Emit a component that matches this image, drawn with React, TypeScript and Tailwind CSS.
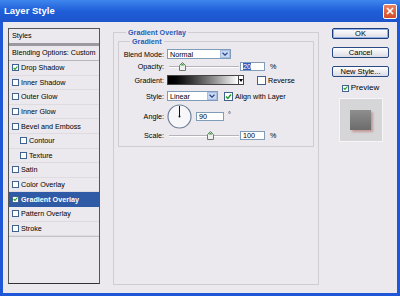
const styles = [
  { name: 'Drop Shadow', checked: true },
  { name: 'Inner Shadow' },
  { name: 'Outer Glow' },
  { name: 'Inner Glow' },
  { name: 'Bevel and Emboss' },
  { name: 'Contour', indent: true },
  { name: 'Texture', indent: true },
  { name: 'Satin' },
  { name: 'Color Overlay' },
  { name: 'Gradient Overlay', checked: true, active: true },
  { name: 'Pattern Overlay' },
  { name: 'Stroke' },
];

function Check({ on }: { on?: boolean }) {
  return (
    <span className="inline-flex h-[7px] w-[7px] shrink-0 items-center justify-center border border-[#3f628f] bg-white">
      {on && (
        <svg width="6" height="6" viewBox="0 0 6 6">
          <path d="M0.8 3 L2.4 4.6 L5.3 1.2" fill="none" stroke="#1e9a1e" strokeWidth="1.3" />
        </svg>
      )}
    </span>
  );
}

function Chevron() {
  return (
    <span className="flex h-full w-[10px] items-center justify-center border border-[#a9bde0] bg-[#c8d8f4]">
      <svg width="6" height="4" viewBox="0 0 6 4">
        <path d="M0.5 0.8 L3 3.2 L5.5 0.8" fill="none" stroke="#2c4a86" strokeWidth="1.2" />
      </svg>
    </span>
  );
}

function Slider({ at }: { at: number }) {
  return (
    <div className="relative h-full w-[70px]">
      <div className="absolute left-0 right-0 top-[5px] h-[2px] border-t border-[#b5b3b8] bg-white" />
      <svg className="absolute top-[1px]" style={{ left: at - 3 }} width="7" height="9" viewBox="0 0 7 9">
        <path d="M3.5 0.5 L6.5 3.5 L6.5 8.5 L0.5 8.5 L0.5 3.5 Z" fill="#f0f0f0" stroke="#6f7a6f" />
        <path d="M3.5 1.5 L5.5 3.5 L1.5 3.5 Z" fill="#2fa62f" />
      </svg>
    </div>
  );
}

function Field({ value, sel, w }: { value: string; sel?: boolean; w: string }) {
  return (
    <span className={`flex h-[9px] items-center border border-[#7f9db9] bg-white pl-[2px] ${w}`}>
      <span className={sel ? 'bg-[#2f5ec0] text-white' : ''}>{value}</span>
    </span>
  );
}

function Btn({ label, main }: { label: string; main?: boolean }) {
  return (
    <div
      className={`flex h-[11px] w-[57px] items-center justify-center rounded-[2px] border bg-gradient-to-b from-white to-[#dcdbe4] ${
        main ? 'border-[#1d3d7a] shadow-[inset_0_0_0_1px_#8fb0e6]' : 'border-[#2a4a86]'
      }`}
    >
      {label}
    </div>
  );
}

export default function App() {
  return (
    <div
      className="flex h-[296px] w-[400px] flex-col bg-[#1f58d6] text-[7.2px] leading-none text-black"
      style={{ fontFamily: '"Liberation Sans", Arial, sans-serif' }}
    >
      <div className="flex h-[22px] items-center justify-between bg-gradient-to-b from-[#3f86ee] via-[#1f5ed8] to-[#1c54cc] pl-[4px] pr-[3px]">
        <span className="text-[9.5px] font-bold text-white">Layer Style</span>
        <span className="flex h-[15px] w-[14px] items-center justify-center rounded-[2px] border border-white bg-gradient-to-b from-[#e98262] to-[#d44a25]">
          <svg width="8" height="8" viewBox="0 0 8 8">
            <path d="M1 1 L7 7 M7 1 L1 7" stroke="white" strokeWidth="1.7" />
          </svg>
        </span>
      </div>

      <div className="mx-[3px] mb-[3px] flex flex-1 bg-[#ebe9ed] pl-[5px] pt-[6px]">
        {/* styles list */}
        <div className="flex h-[256px] w-[92px] flex-col border border-[#555] border-b-[#333] bg-[#ebe9ed]">
          <div className="flex h-[14px] items-center pl-[3px]">Styles</div>
          <div className="h-[3px] bg-[#9c9aa0]" />
          <div className="flex h-[15px] items-center border-b border-[#b8b6bb] pl-[3px]">Blending Options: Custom</div>
          {styles.map((s) => (
            <div
              key={s.name}
              className={`flex h-[14.6px] items-center gap-[2px] border-b ${
                s.active ? 'border-[#2f5aa6] bg-[#2f5aa6] font-bold text-white' : 'border-[#dedce1]'
              } ${s.indent ? 'pl-[11px]' : 'pl-[3px]'}`}
            >
              <Check on={s.checked} />
              {s.name}
            </div>
          ))}
          <div className="flex-1 border-t border-[#c4c2c7]" />
        </div>

        {/* options */}
        <fieldset className="ml-[13px] mt-[1px] h-[256px] w-[206px] border border-[#cfcdd2] px-[4px]">
          <legend className="ml-[8px] px-[2px] font-bold text-[#2a5bb6]">Gradient Overlay</legend>
          <fieldset className="mt-[2px] border border-[#cfcdd2] pb-[6px]">
            <legend className="ml-[11px] px-[2px] font-bold text-[#2a5bb6]">Gradient</legend>

            <div className="mt-[4px] flex h-[10px] items-center gap-[3px]">
              <span className="w-[45px] text-right">Blend Mode:</span>
              <span className="flex h-full w-[64px] items-center justify-between border border-[#7f9db9] bg-white pl-[2px]">
                Normal
                <Chevron />
              </span>
            </div>

            <div className="mt-[2px] flex h-[10px] items-center gap-[3px]">
              <span className="w-[45px] text-right">Opacity:</span>
              <div className="ml-[2px] flex h-full items-center">
                <Slider at={13} />
                <Field value="20" sel w="w-[25px] ml-[1px]" />
                <span className="ml-[5px]">%</span>
              </div>
            </div>

            <div className="mt-[4px] flex h-[10px] items-center gap-[3px]">
              <span className="w-[45px] text-right">Gradient:</span>
              <span className="flex h-full w-[77px] items-stretch border border-[#444]">
                <span className="flex-1 bg-gradient-to-r from-black to-white" />
                <span className="flex w-[5px] items-center justify-center border-l border-[#444] bg-white">
                  <svg width="4" height="3" viewBox="0 0 4 3">
                    <path d="M0 0 L4 0 L2 3 Z" fill="#000" />
                  </svg>
                </span>
              </span>
              <span className="ml-[10px] flex items-center gap-[2px]">
                <span className="h-[9px] w-[9px] border border-[#3f628f] bg-white" />
                Reverse
              </span>
            </div>

            <div className="mt-[6px] flex h-[10px] items-center gap-[3px]">
              <span className="w-[45px] text-right">Style:</span>
              <span className="flex h-full w-[51px] items-center justify-between border border-[#7f9db9] bg-white pl-[2px]">
                Linear
                <Chevron />
              </span>
              <span className="ml-[3px] flex items-center gap-[2px]">
                <span className="flex h-[9px] w-[9px] items-center justify-center border border-[#3f628f] bg-white">
                  <svg width="7" height="7" viewBox="0 0 7 7">
                    <path d="M1 3.5 L2.8 5.4 L6 1.5" fill="none" stroke="#1e9a1e" strokeWidth="1.4" />
                  </svg>
                </span>
                Align with Layer
              </span>
            </div>

            <div className="mt-[3px] flex h-[24px] items-center gap-[3px]">
              <span className="w-[45px] text-right">Angle:</span>
              <svg width="25" height="25" viewBox="0 0 25 25">
                <circle cx="12.5" cy="12.5" r="11.5" fill="#f7f7f9" stroke="#6f7f9a" strokeWidth="1.2" />
                <line x1="12.5" y1="12.5" x2="12.5" y2="2" stroke="#111" strokeWidth="1" />
                <circle cx="12.5" cy="12.5" r="1" fill="#111" />
              </svg>
              <Field value="90" w="w-[28px] ml-[1px]" />
              <span className="ml-[1px] self-start pt-[7px]">°</span>
            </div>

            <div className="mt-[2px] flex h-[10px] items-center gap-[3px]">
              <span className="w-[45px] text-right">Scale:</span>
              <div className="ml-[2px] flex h-full items-center">
                <Slider at={41} />
                <Field value="100" w="w-[25px] ml-[1px]" />
                <span className="ml-[5px]">%</span>
              </div>
            </div>
          </fieldset>
        </fieldset>

        {/* buttons */}
        <div className="ml-[13px] flex flex-col items-center gap-[8px] text-[7.5px]">
          <Btn label="OK" main />
          <Btn label="Cancel" />
          <Btn label="New Style..." />
          <div className="mt-[-1px] flex items-center gap-[2px] text-[8px]">
            <Check on />
            Preview
          </div>
          <div className="mt-[-2px] flex h-[44px] w-[44px] items-center justify-center border border-[#f6f6f8] bg-[#d6d5d8]">
            <div className="h-[20px] w-[21px] bg-gradient-to-b from-[#8e8e8e] to-[#6c6c6c] shadow-[2px_2px_2px_#c49a9a]" />
          </div>
        </div>
      </div>
    </div>
  );
}
